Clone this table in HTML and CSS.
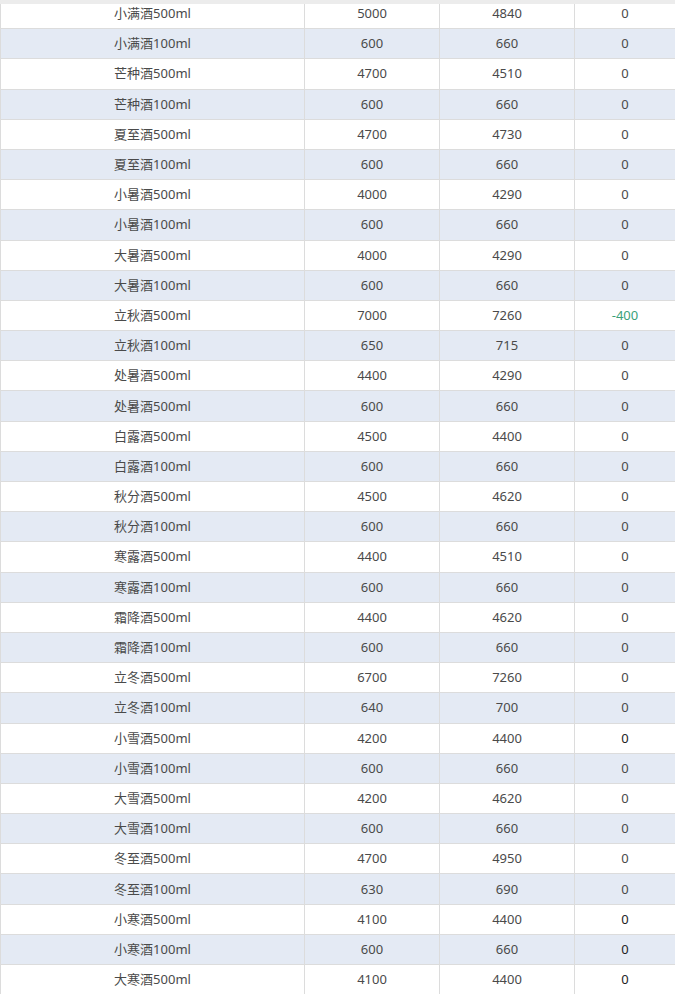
FILE: index.html
```html
<!DOCTYPE html>
<html lang="zh">
<head>
<meta charset="utf-8">
<link rel="stylesheet" href="styles.css">
</head>
<body>
<div class="topbar"></div>
<div class="scroller">
<table class="grid">
<colgroup><col class="c1"><col class="c2"><col class="c3"><col class="c4"></colgroup>
<tbody>
<tr><td>小满酒500ml</td><td>5000</td><td>4840</td><td>0</td></tr>
<tr><td>小满酒100ml</td><td>600</td><td>660</td><td>0</td></tr>
<tr><td>芒种酒500ml</td><td>4700</td><td>4510</td><td>0</td></tr>
<tr><td>芒种酒100ml</td><td>600</td><td>660</td><td>0</td></tr>
<tr><td>夏至酒500ml</td><td>4700</td><td>4730</td><td>0</td></tr>
<tr><td>夏至酒100ml</td><td>600</td><td>660</td><td>0</td></tr>
<tr><td>小暑酒500ml</td><td>4000</td><td>4290</td><td>0</td></tr>
<tr><td>小暑酒100ml</td><td>600</td><td>660</td><td>0</td></tr>
<tr><td>大暑酒500ml</td><td>4000</td><td>4290</td><td>0</td></tr>
<tr><td>大暑酒100ml</td><td>600</td><td>660</td><td>0</td></tr>
<tr><td>立秋酒500ml</td><td>7000</td><td>7260</td><td class="neg">-400</td></tr>
<tr><td>立秋酒100ml</td><td>650</td><td>715</td><td>0</td></tr>
<tr><td>处暑酒500ml</td><td>4400</td><td>4290</td><td>0</td></tr>
<tr><td>处暑酒500ml</td><td>600</td><td>660</td><td>0</td></tr>
<tr><td>白露酒500ml</td><td>4500</td><td>4400</td><td>0</td></tr>
<tr><td>白露酒100ml</td><td>600</td><td>660</td><td>0</td></tr>
<tr><td>秋分酒500ml</td><td>4500</td><td>4620</td><td>0</td></tr>
<tr><td>秋分酒100ml</td><td>600</td><td>660</td><td>0</td></tr>
<tr><td>寒露酒500ml</td><td>4400</td><td>4510</td><td>0</td></tr>
<tr><td>寒露酒100ml</td><td>600</td><td>660</td><td>0</td></tr>
<tr><td>霜降酒500ml</td><td>4400</td><td>4620</td><td>0</td></tr>
<tr><td>霜降酒100ml</td><td>600</td><td>660</td><td>0</td></tr>
<tr><td>立冬酒500ml</td><td>6700</td><td>7260</td><td>0</td></tr>
<tr><td>立冬酒100ml</td><td>640</td><td>700</td><td>0</td></tr>
<tr><td>小雪酒500ml</td><td>4200</td><td>4400</td><td class="dark">0</td></tr>
<tr><td>小雪酒100ml</td><td>600</td><td>660</td><td>0</td></tr>
<tr><td>大雪酒500ml</td><td>4200</td><td>4620</td><td>0</td></tr>
<tr><td>大雪酒100ml</td><td>600</td><td>660</td><td>0</td></tr>
<tr><td>冬至酒500ml</td><td>4700</td><td>4950</td><td>0</td></tr>
<tr><td>冬至酒100ml</td><td>630</td><td>690</td><td>0</td></tr>
<tr><td>小寒酒500ml</td><td>4100</td><td>4400</td><td class="dark">0</td></tr>
<tr><td>小寒酒100ml</td><td>600</td><td>660</td><td class="dark">0</td></tr>
<tr><td>大寒酒500ml</td><td>4100</td><td>4400</td><td class="dark">0</td></tr>
</tbody>
</table>
</div>
</body>
</html>
```
FILE: styles.css
```css
html, body {
  margin: 0;
  padding: 0;
  background: #ffffff;
}
body {
  font-family: "Noto Sans", "Noto Sans CJK SC", sans-serif;
  font-size: 13px;
  color: #4a4a4a;
  width: 675px;
  height: 994px;
  overflow: hidden;
}
.topbar {
  height: 4px;
  background: #ececec;
}
.scroller {
  overflow: hidden;
  width: 675px;
  height: 990px;
}
.grid {
  border-collapse: separate;
  border-spacing: 0;
  table-layout: fixed;
  width: 676px;
  border-left: 1px solid #dcdcdc;
  margin-top: -5px;
}
.c1 { width: 304px; }
.c2 { width: 135px; }
.c3 { width: 135px; }
.c4 { width: 101px; }
.grid td {
  border-right: 1px solid #dcdcdc;
  border-bottom: 1px solid #dcdcdc;
  height: 28.19px;
  padding: 0 0 1px 0;
  text-align: center;
  vertical-align: middle;
  line-height: 18px;
  white-space: nowrap;
}
.grid tr:nth-child(even) td {
  background: #e4eaf4;
}
.grid td.neg {
  color: #3aa17a;
}
.grid td.dark {
  color: #222222;
}
```
